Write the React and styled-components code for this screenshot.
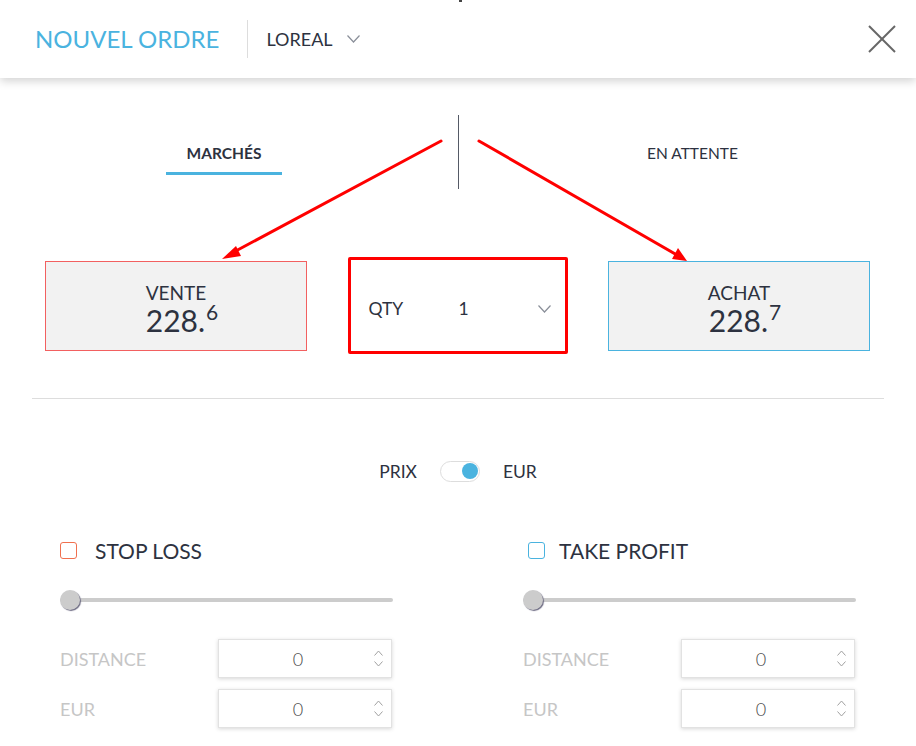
import React from 'react';
import styled, { createGlobalStyle } from 'styled-components';

const GlobalStyle = createGlobalStyle`
  html, body {
    margin: 0;
    padding: 0;
    background: #fff;
    font-family: Lato, "Open Sans", "Liberation Sans", sans-serif;
    color: #2d3240;
  }
`;

const Page = styled.div`
  position: relative;
  width: 916px;
  height: 746px;
  overflow: hidden;
  background: #fff;
`;

const Header = styled.header`
  display: flex;
  align-items: center;
  height: 78px;
  padding: 0 20px 0 35px;
  background: #fff;
  box-shadow: 0 3px 9px rgba(0, 0, 0, 0.18);
  position: relative;
  z-index: 1;
`;

const Title = styled.h1`
  margin: 0 0 1px;
  font-size: 24px;
  font-weight: 400;
  color: #4ab3df;
`;

const HeaderDivider = styled.div`
  width: 1px;
  height: 38px;
  background: #dddddd;
  margin: 0 18px 0 28px;
`;

const Symbol = styled.div`
  display: flex;
  align-items: center;
  gap: 14px;
  font-size: 18px;
  color: #2d3240;
`;

const CloseButton = styled.button`
  margin-left: auto;
  border: 0;
  background: none;
  padding: 0;
  width: 28px;
  height: 28px;
  cursor: pointer;
`;

const Tabs = styled.div`
  display: grid;
  grid-template-columns: 448px 1px 1fr;
  column-gap: 10px;
  height: 74px;
  margin-top: 37px;
`;

const TabCell = styled.div`
  display: flex;
  align-items: flex-start;
  justify-content: center;
`;

const Tab = styled.div`
  margin-top: 29px;
  padding: 0 21px 9px;
  font-size: 15.5px;
  line-height: 19px;
  font-weight: ${p => (p.active ? 700 : 400)};
  color: #2d3240;
  border-bottom: 3px solid ${p => (p.active ? '#4ab3df' : 'transparent')};
`;

const TabDivider = styled.div`
  background: #555a66;
`;

const Quotes = styled.div`
  display: flex;
  align-items: center;
  justify-content: space-between;
  margin: 68px 46px 0 45px;
`;

const PriceCard = styled.div`
  box-sizing: border-box;
  width: 262px;
  height: 90px;
  border: 1px solid ${p => p.accent};
  background: #f2f2f2;
  display: flex;
  flex-direction: column;
  align-items: center;
  justify-content: center;
  padding-top: 12px;
`;

const CardLabel = styled.div`
  font-size: 19px;
  line-height: 20px;
`;

const CardPrice = styled.div`
  font-size: 30px;
  line-height: 32px;
  margin: 1px 0 0 12px;

  sup {
    font-size: 21px;
    vertical-align: 0;
    position: relative;
    top: -12px;
    margin-left: 1px;
  }
`;

const QtyBox = styled.div`
  box-sizing: border-box;
  width: 220px;
  height: 97px;
  border: 3px solid #ff0000;
  border-radius: 2px;
  display: flex;
  align-items: center;
  padding: 6px 14px 0 18px;
  font-size: 17.5px;
`;

const QtyLabel = styled.span`
  width: 90px;
`;

const QtyValue = styled.span`
  flex: 1;
`;

const Rule = styled.div`
  height: 1px;
  background: #dddddd;
  margin: 44px 32px 0;
`;

const ToggleRow = styled.div`
  display: flex;
  align-items: center;
  justify-content: center;
  gap: 23px;
  height: 20px;
  margin-top: 62px;
  font-size: 17.5px;
`;

const Switch = styled.div`
  box-sizing: border-box;
  width: 40px;
  height: 21px;
  border: 1px solid #dddddd;
  border-radius: 11px;
  display: flex;
  align-items: center;
  justify-content: ${p => (p.on ? 'flex-end' : 'flex-start')};
  padding: 0 1px;

  &::after {
    content: '';
    width: 16px;
    height: 16px;
    border-radius: 50%;
    background: #4ab3df;
  }
`;

const Columns = styled.div`
  display: grid;
  grid-template-columns: 333px 333px;
  column-gap: 130px;
  padding-left: 60px;
  margin-top: 59px;
`;

const Column = styled.div`
  display: flex;
  flex-direction: column;
`;

const OptionHeader = styled.label`
  display: flex;
  align-items: center;
  height: 20px;
  padding-left: ${p => p.indent}px;
  gap: ${p => p.gap}px;
  font-size: 21px;
  color: #2d3240;
`;

const Checkbox = styled.span`
  box-sizing: border-box;
  width: 17px;
  height: 17px;
  border: 1.5px solid ${p => p.accent};
  border-radius: 3px;
`;

const Slider = styled.div`
  position: relative;
  height: 20px;
  margin-top: 30px;
  display: flex;
  align-items: center;
`;

const Track = styled.div`
  flex: 1;
  height: 4px;
  border-radius: 2px;
  background: #cccccc;
`;

const Knob = styled.span`
  position: absolute;
  left: 0;
  top: 0;
  width: 20px;
  height: 20px;
  border-radius: 50%;
  background: #cccccc;
  box-shadow: 1px 1px 1px #6a6880;
`;

const Fields = styled.div`
  display: flex;
  flex-direction: column;
  gap: 11px;
  margin-top: 29px;
`;

const FieldRow = styled.div`
  display: grid;
  grid-template-columns: 158px 174px;
  align-items: center;
`;

const FieldLabel = styled.span`
  font-size: 18px;
  color: #c6c6c6;
`;

const NumberBox = styled.div`
  box-sizing: border-box;
  height: 39px;
  border: 1px solid #e2e2e2;
  box-shadow: 0 1px 4px rgba(0, 0, 0, 0.16);
  display: flex;
  align-items: center;
  background: #fff;
`;

const NumberValue = styled.span`
  flex: 1;
  text-align: center;
  padding-left: 12px;
  font-size: 18px;
  font-weight: 300;
  color: #4a4a4a;
`;

const Spinner = styled.span`
  display: flex;
  flex-direction: column;
  gap: 5px;
  width: 26px;
  align-items: center;
`;

const Overlay = styled.svg`
  position: absolute;
  inset: 0;
  pointer-events: none;
  z-index: 2;
`;

const TopMark = styled.span`
  position: absolute;
  left: 459px;
  top: 0;
  width: 3px;
  height: 2px;
  background: #444;
  z-index: 3;
`;

const Chevron = ({ color = '#8a8f99', w = 13, h = 7 }) => (
  <svg width={w} height={h + 1} viewBox={`0 0 ${w} ${h + 1}`}>
    <polyline points={`0.5,0.5 ${w / 2},${h} ${w - 0.5},0.5`} fill="none" stroke={color} strokeWidth="1.2" />
  </svg>
);

const SmallArrow = ({ up }) => (
  <svg width="9" height="6" viewBox="0 0 9 6">
    <polyline
      points={up ? '0.5,5.5 4.5,1 8.5,5.5' : '0.5,0.5 4.5,5 8.5,0.5'}
      fill="none"
      stroke="#a0a0a0"
      strokeWidth="1"
    />
  </svg>
);

const NumberField = ({ label, value }) => (
  <FieldRow>
    <FieldLabel>{label}</FieldLabel>
    <NumberBox>
      <NumberValue>{value}</NumberValue>
      <Spinner>
        <SmallArrow up />
        <SmallArrow />
      </Spinner>
    </NumberBox>
  </FieldRow>
);

const OptionColumn = ({ title, accent, indent, gap }) => (
  <Column>
    <OptionHeader indent={indent} gap={gap}>
      <Checkbox accent={accent} />
      {title}
    </OptionHeader>
    <Slider>
      <Track />
      <Knob />
    </Slider>
    <Fields>
      <NumberField label="DISTANCE" value="0" />
      <NumberField label="EUR" value="0" />
    </Fields>
  </Column>
);

const App = () => {
  return (
    <Page>
      <GlobalStyle />
      <TopMark />
      <Header>
        <Title>NOUVEL ORDRE</Title>
        <HeaderDivider />
        <Symbol>
          LOREAL
          <Chevron />
        </Symbol>
        <CloseButton aria-label="Fermer">
          <svg width="28" height="28" viewBox="0 0 28 28">
            <line x1="1" y1="1" x2="27" y2="27" stroke="#666" strokeWidth="2" />
            <line x1="27" y1="1" x2="1" y2="27" stroke="#666" strokeWidth="2" />
          </svg>
        </CloseButton>
      </Header>

      <Tabs>
        <TabCell>
          <Tab active>MARCHÉS</Tab>
        </TabCell>
        <TabDivider />
        <TabCell>
          <Tab>EN ATTENTE</Tab>
        </TabCell>
      </Tabs>

      <Quotes>
        <PriceCard accent="#f26060">
          <CardLabel>VENTE</CardLabel>
          <CardPrice>
            228.<sup>6</sup>
          </CardPrice>
        </PriceCard>
        <QtyBox>
          <QtyLabel>QTY</QtyLabel>
          <QtyValue>1</QtyValue>
          <Chevron w={13} h={7} />
        </QtyBox>
        <PriceCard accent="#4ab3df">
          <CardLabel>ACHAT</CardLabel>
          <CardPrice>
            228.<sup>7</sup>
          </CardPrice>
        </PriceCard>
      </Quotes>

      <Rule />

      <ToggleRow>
        <span>PRIX</span>
        <Switch on />
        <span>EUR</span>
      </ToggleRow>

      <Columns>
        <OptionColumn title="STOP LOSS" accent="#f0704f" indent={0} gap={18} />
        <OptionColumn title="TAKE PROFIT" accent="#4ab3df" indent={5} gap={14} />
      </Columns>

      <Overlay width="916" height="746" viewBox="0 0 916 746">
        <line x1="441" y1="141" x2="232" y2="253" stroke="#ff0000" strokeWidth="3" strokeLinecap="round" />
        <polygon points="222,259 236,246 241,256" fill="#ff0000" />
        <line x1="479" y1="141" x2="677" y2="255" stroke="#ff0000" strokeWidth="3" strokeLinecap="round" />
        <polygon points="687,261 672,259 678,248" fill="#ff0000" />
      </Overlay>
    </Page>
  );
};

export default App;
